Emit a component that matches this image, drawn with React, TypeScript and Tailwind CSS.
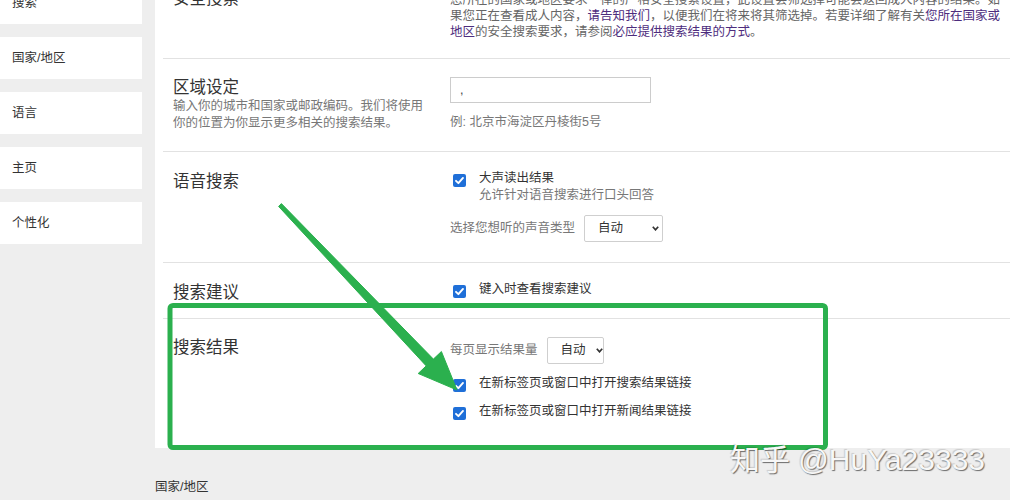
import type { ReactNode } from "react";

const sideItems = ["搜索", "国家/地区", "语言", "主页", "个性化"];

function Checkbox() {
  return (
    <svg width="13" height="13" viewBox="0 0 13 13" className="mt-[4px] ml-[3px] shrink-0">
      <rect x="0" y="0" width="13" height="13" rx="2" fill="#1f6fd8" />
      <path d="M3 6.8 L5.4 9.2 L10 3.9" fill="none" stroke="#fff" strokeWidth="1.9" strokeLinecap="round" strokeLinejoin="round" />
    </svg>
  );
}

function CheckItem({ label, sub }: { label: string; sub?: string }) {
  return (
    <div className="flex items-start gap-[13px]">
      <Checkbox />
      <div className="leading-[17px]">
        <div className="text-[#333]">{label}</div>
        {sub && <div className="text-[#777]">{sub}</div>}
      </div>
    </div>
  );
}

function Select({ width, chevronGap }: { width: string; chevronGap: string }) {
  return (
    <div className={`flex h-[27px] shrink-0 items-center whitespace-nowrap rounded-[2px] border border-[#cfcfcf] bg-white pl-[13px] text-[#333] ${width}`}>
      <span>自动</span>
      <svg width="7" height="5" viewBox="0 0 7 5" className={`shrink-0 ${chevronGap}`}>
        <path d="M0.8 0.8 L3.5 3.8 L6.2 0.8" fill="none" stroke="#333" strokeWidth="1.7" />
      </svg>
    </div>
  );
}

interface RowProps {
  title: string;
  desc?: ReactNode;
  height: string;
  last?: boolean;
  contentPad: string;
  titlePad?: string;
  children: ReactNode;
}

function Row({ title, desc, height, last, contentPad, titlePad = "pt-[18px]", children }: RowProps) {
  return (
    <div className={`flex ${height} ${last ? "" : "border-b border-[#e2e2e2]"}`}>
      <div className={`w-[287px] shrink-0 pl-[10px] ${titlePad}`}>
        <div className="text-[16.5px] leading-[20px] text-[#333]">{title}</div>
        {desc && <div className="mt-[1px] text-[12.5px] leading-[17px] text-[#777]">{desc}</div>}
      </div>
      <div className={`flex-1 ${contentPad}`}>{children}</div>
    </div>
  );
}

const link = "text-[#4d2c7d]";

export default function App() {
  return (
    <div className="relative h-[500px] w-[1010px] overflow-hidden bg-[#eeeeee] font-['Liberation_Sans','Noto_Sans_CJK_SC',sans-serif] text-[12.5px]">
      <div className="-mt-[30px] flex">
        {/* left nav */}
        <aside className="flex w-[142px] shrink-0 flex-col gap-[13px] pt-[12px]">
          {sideItems.map((s) => (
            <div key={s} className="flex h-[42px] items-center bg-white pl-[12px] text-[#333]">
              {s}
            </div>
          ))}
        </aside>

        <div className="ml-[13px] flex-1">
          <main className="bg-white pl-[8px]">
            <Row title="安全搜索" height="h-[89px]" contentPad="pt-[22px]">
              <div className="whitespace-nowrap leading-4 text-[#666]">
                <div>您所在的国家或地区要求一律的严格安全搜索设置，此设置会筛选掉可能会返回成人内容的结果。如</div>
                <div>
                  果您正在查看成人内容，<span className={link}>请告知我们</span>，以便我们在将来将其筛选掉。若要详细了解有关
                  <span className={link}>您所在国家或</span>
                </div>
                <div>
                  <span className={link}>地区</span>的安全搜索要求，请参阅<span className={link}>必应提供搜索结果的方式</span>。
                </div>
              </div>
            </Row>

            <Row
              title="区域设定"
              height="h-[93px]"
              contentPad="pt-[18px]"
              desc={
                <>
                  输入你的城市和国家或邮政编码。我们将使用
                  <br />
                  你的位置为你显示更多相关的搜索结果。
                </>
              }
            >
              <div className="flex h-[26px] w-[201px] items-center border border-[#cccccc] pl-[9px] text-[#444]">,</div>
              <div className="mt-[11px] leading-4 text-[#777]">例: 北京市海淀区丹棱街5号</div>
            </Row>

            <Row title="语音搜索" height="h-[111px]" titlePad="pt-[19px]" contentPad="pt-[18px]">
              <CheckItem label="大声读出结果" sub="允许针对语音搜索进行口头回答" />
              <div className="mt-[11px] flex items-center gap-[9px]">
                <span className="text-[#777]">选择您想听的声音类型</span>
                <Select width="w-[79px]" chevronGap="ml-[29px]" />
              </div>
            </Row>

            <Row title="搜索建议" height="h-[56px]" titlePad="pt-[19px]" contentPad="pt-[18px]">
              <CheckItem label="键入时查看搜索建议" />
            </Row>

            <Row title="搜索结果" height="h-[129px]" last contentPad="pt-[18px]">
              <div className="flex items-center gap-[9px]">
                <span className="text-[#777]">每页显示结果量</span>
                <Select width="w-[57px]" chevronGap="ml-[10px]" />
              </div>
              <div className="mt-[11px] flex flex-col gap-[11px]">
                <CheckItem label="在新标签页或窗口中打开搜索结果链接" />
                <CheckItem label="在新标签页或窗口中打开新闻结果链接" />
              </div>
            </Row>
          </main>
          <div className="mt-[31px] leading-4 text-[#333]">国家/地区</div>
        </div>
      </div>

      {/* green annotation */}
      <svg className="pointer-events-none absolute left-0 top-0" width="1010" height="500" viewBox="0 0 1010 500">
        <rect x="170" y="305.5" width="655.5" height="142" rx="3" fill="none" stroke="#2bb04e" strokeWidth="5" />
        <polygon
          points="281.4,203.6 433.4,359.1 441.4,351.5 457,390 418.2,373.5 426.2,365.9 278.6,206.4"
          fill="#2bb04e"
          stroke="#2bb04e"
          strokeWidth="1"
          strokeLinejoin="round"
        />
      </svg>

      {/* watermark */}
      <div className="absolute left-[730px] top-[442px] whitespace-nowrap text-[30px] leading-[36px] text-[#f7f7f7] [text-shadow:1px_1px_1px_rgba(0,0,0,0.55),-1px_-1px_1px_rgba(0,0,0,0.15)]">
        知乎 @HuYa23333
      </div>
    </div>
  );
}
